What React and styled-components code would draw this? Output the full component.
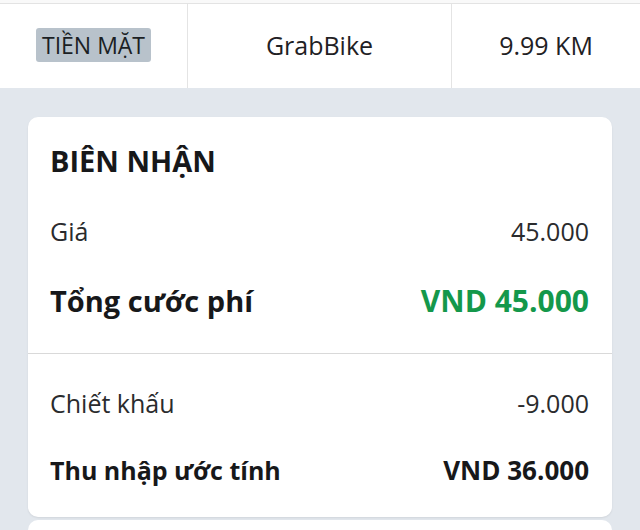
import React from "react"
import styled, { createGlobalStyle } from "styled-components"

const GlobalStyle = createGlobalStyle`
  html, body {
    margin: 0;
    padding: 0;
    background: #e2e7ed;
    overflow: hidden;
  }
  body {
    font-family: "Open Sans", "Noto Sans", sans-serif;
    color: #1c1d1f;
  }
`

const Page = styled.div`
  width: 640px;
  height: 530px;
  overflow: hidden;
  background: #e2e7ed;
`

const TopStrip = styled.div`
  background: #f9f9f9;
  padding-top: 3px;
`

const InfoBar = styled.div`
  display: grid;
  grid-template-columns: 187px 264px 1fr;
  height: 84px;
  background: #ffffff;
  border-top: 1px solid #e3e3e3;
`

const InfoCell = styled.div`
  display: flex;
  align-items: center;
  justify-content: center;
  font-size: 25px;
  color: #1f2124;
  border-left: ${props => (props.first ? "none" : "1px solid #e4e4e4")};
  padding-bottom: 2px;
`

const PayBadge = styled.span`
  display: inline-flex;
  align-items: center;
  height: 34px;
  padding: 0 6px;
  background: #b8c2cb;
  border-radius: 3px;
  font-size: 23px;
  color: #1b1f24;
`

const Receipt = styled.div`
  margin: 29px 28px 0;
  background: #ffffff;
  border-radius: 10px;
  box-shadow: 0 1px 2px rgba(0, 0, 0, 0.08);
  overflow: hidden;
`

const Section = styled.div`
  display: flex;
  flex-direction: column;
  gap: ${props => props.gap}px;
  padding: ${props => props.pad};
  border-top: ${props => (props.divided ? "1px solid #d9d9d9" : "none")};
`

const Title = styled.h2`
  margin: 0;
  font-size: 29px;
  font-weight: 700;
  line-height: 40px;
  color: #17181a;
`

const Row = styled.div`
  display: flex;
  justify-content: space-between;
  align-items: baseline;
  line-height: 40px;
  font-size: ${props => props.size}px;
  font-weight: ${props => (props.strong ? 700 : 400)};
  color: ${props => (props.strong ? "#17181a" : "#2a2b2d")};
`

const Amount = styled.span`
  color: ${props => props.color || "inherit"};
  font-size: ${props => (props.size ? `${props.size}px` : "inherit")};
`

const NextCard = styled.div`
  margin: 3px 28px 0;
  height: 40px;
  background: #ffffff;
  border-radius: 10px;
`

export default function App() {
  return (
    <Page>
      <GlobalStyle />
      <TopStrip>
        <InfoBar>
          <InfoCell first>
            <PayBadge>TIỀN MẶT</PayBadge>
          </InfoCell>
          <InfoCell>GrabBike</InfoCell>
          <InfoCell>9.99 KM</InfoCell>
        </InfoBar>
      </TopStrip>
      <Receipt>
        <Section gap={30} pad="24px 23px 32px 22px">
          <Title>BIÊN NHẬN</Title>
          <Row size={25}>
            <span>Giá</span>
            <Amount>45.000</Amount>
          </Row>
          <Row size={29} strong>
            <span>Tổng cước phí</span>
            <Amount color="#14984b" size={30}>VND 45.000</Amount>
          </Row>
        </Section>
        <Section divided gap={27} pad="29px 23px 27px 22px">
          <Row size={25}>
            <span>Chiết khấu</span>
            <Amount>-9.000</Amount>
          </Row>
          <Row size={25} strong>
            <span>Thu nhập ước tính</span>
            <Amount size={26}>VND 36.000</Amount>
          </Row>
        </Section>
      </Receipt>
      <NextCard />
    </Page>
  )
}
